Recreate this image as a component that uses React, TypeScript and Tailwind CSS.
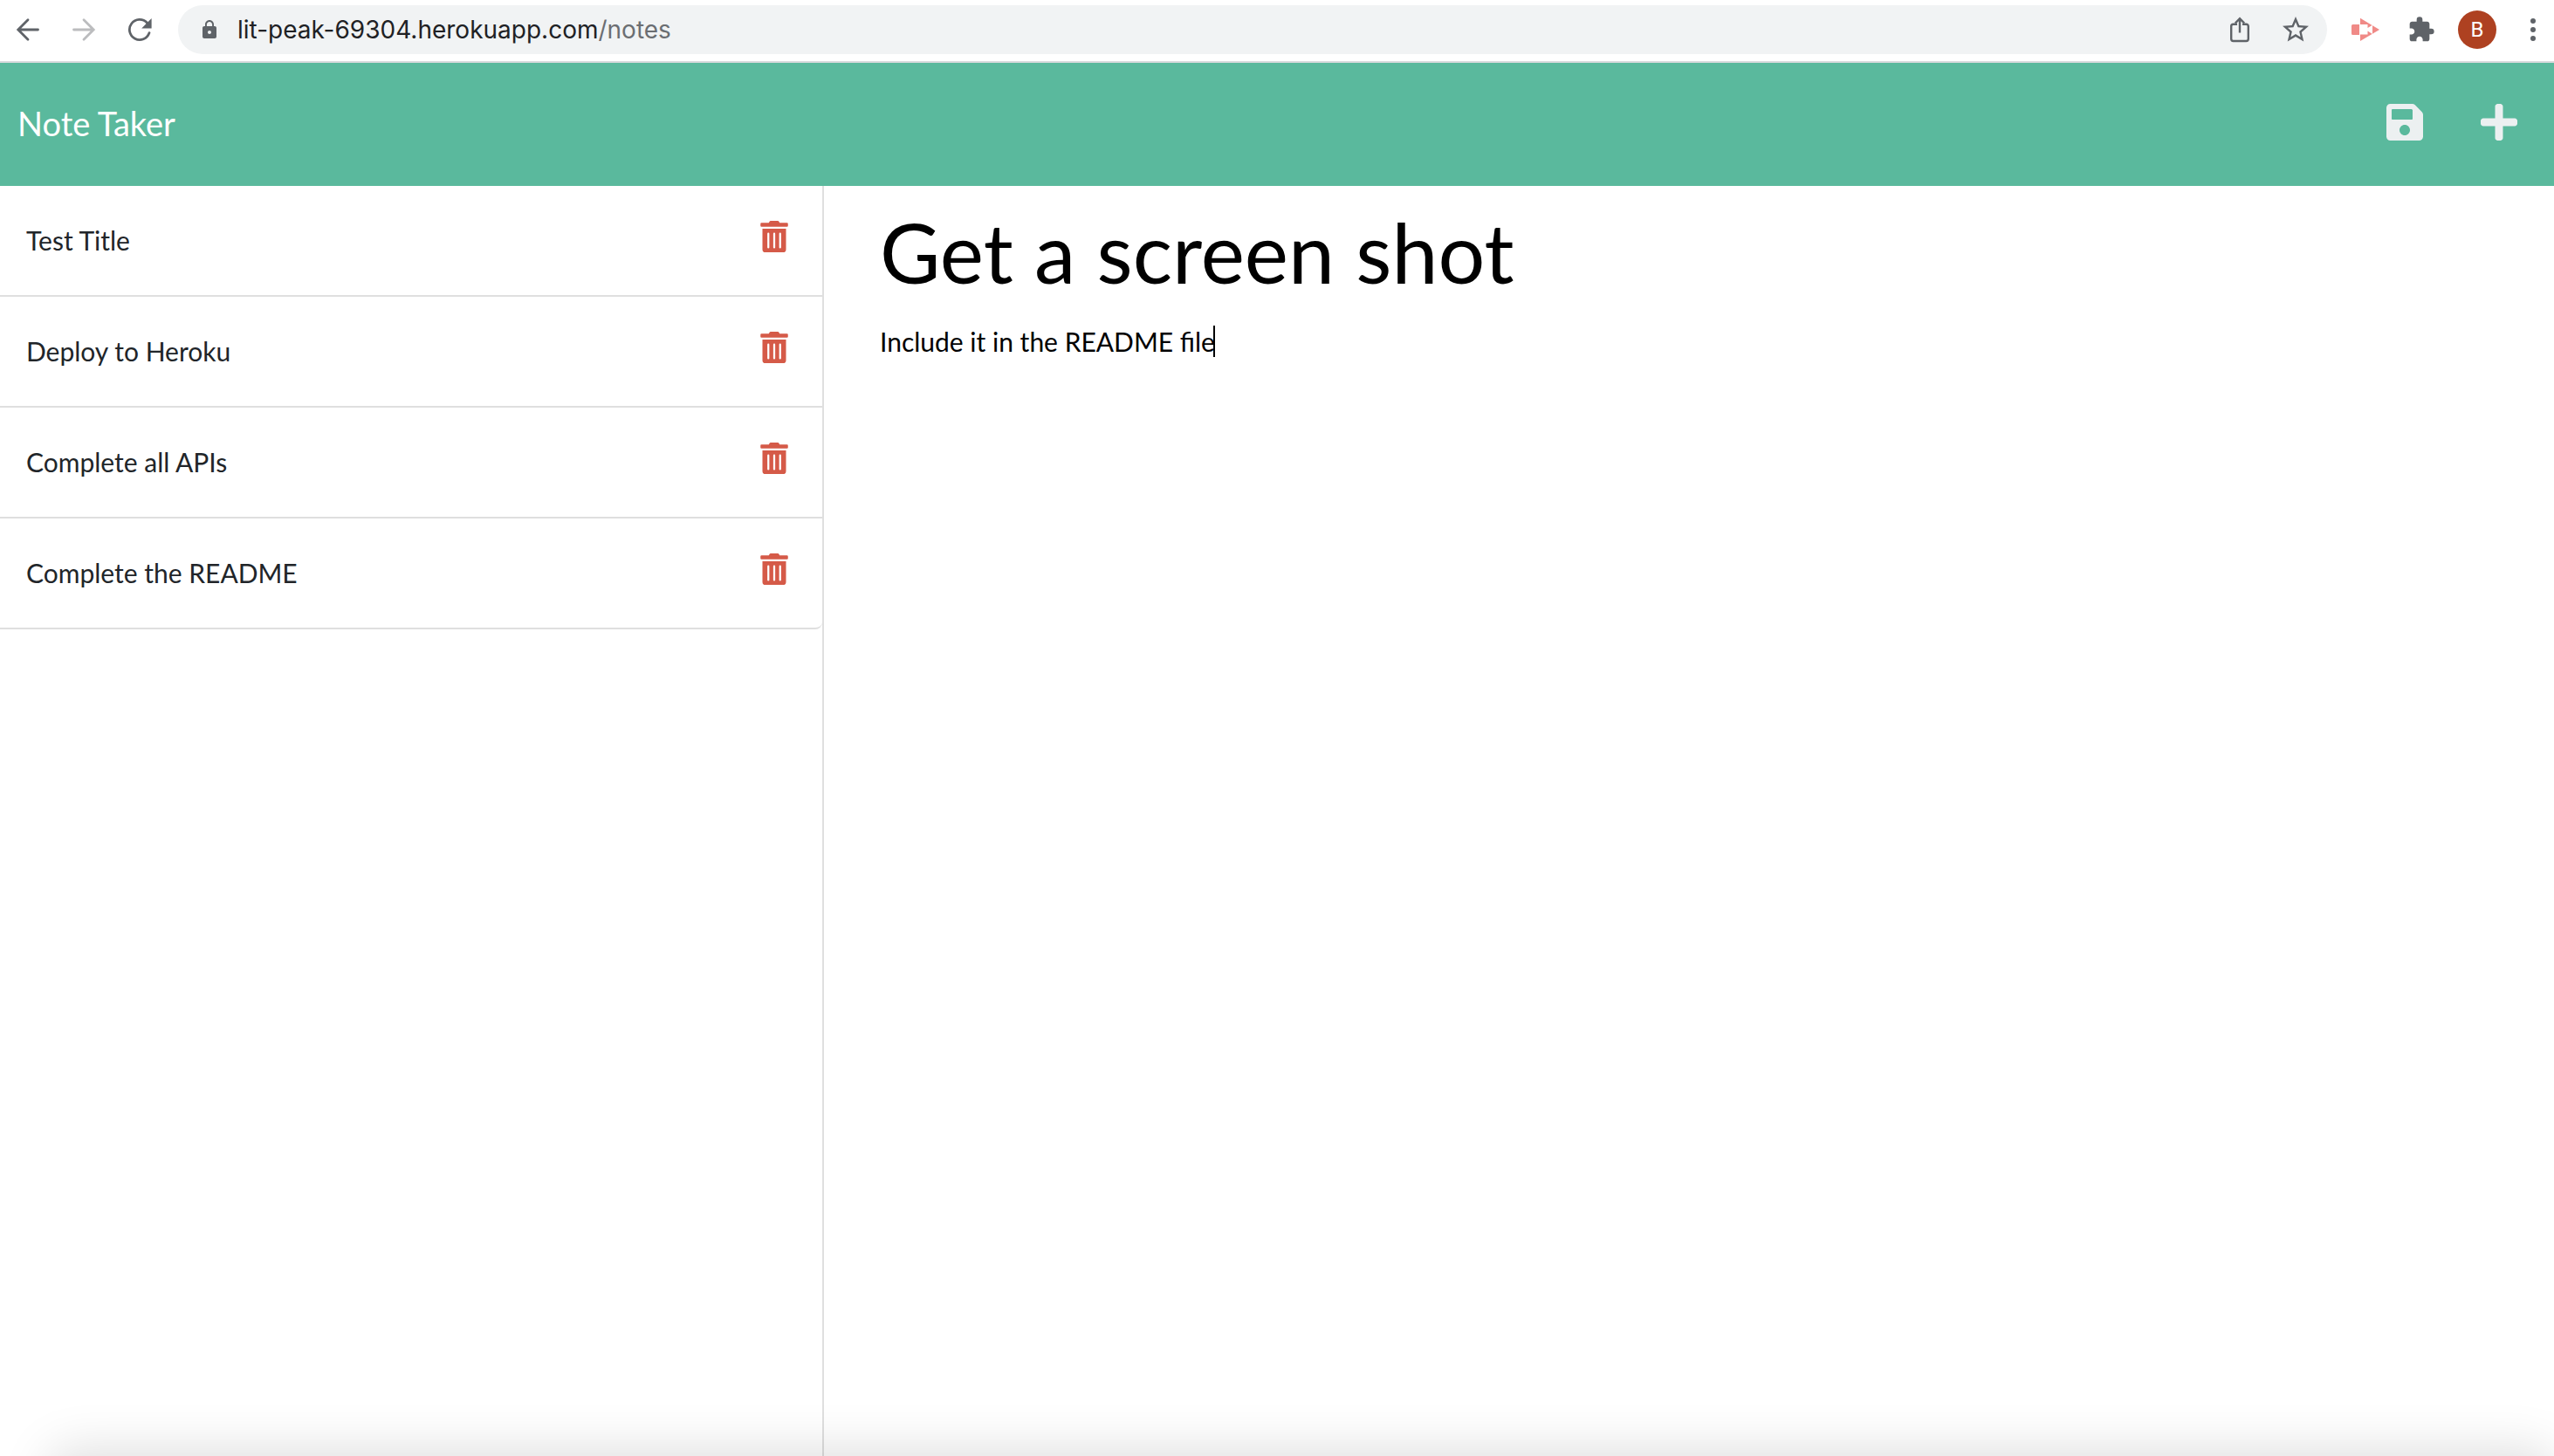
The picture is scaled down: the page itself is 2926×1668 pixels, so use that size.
import React, { useState } from "react";
import { FaPlus, FaSave, FaTrashAlt } from "react-icons/fa";
import { MdExtension, MdLock, MdStarBorder } from "react-icons/md";

const notes = ["Test Title", "Deploy to Heroku", "Complete all APIs", "Complete the README"];

function ArrowIcon({ className }: { className: string }) {
  return (
    <svg viewBox="0 0 28 28" className={className} fill="none" stroke="currentColor" strokeWidth="2.8" strokeLinecap="round" strokeLinejoin="miter" aria-hidden="true">
      <path d="M25.5 14H3M14 2.8 2.8 14 14 25.2" />
    </svg>
  );
}

function ReloadIcon() {
  return (
    <svg viewBox="0 0 28 28" className="size-7" aria-hidden="true">
      <path d="M25 17.6A11.6 11.6 0 1 1 22.4 6" fill="none" stroke="currentColor" strokeWidth="2.8" strokeLinecap="round" />
      <path d="M27.6 1v11.4H16.2z" fill="currentColor" />
    </svg>
  );
}

function ShareIcon() {
  return (
    <svg viewBox="0 0 24 30" className="h-[30px] w-6" fill="none" stroke="currentColor" strokeWidth="2.4" aria-hidden="true">
      <path d="M9 8.7H4.6a2.4 2.4 0 0 0-2.4 2.4v14.5a2.4 2.4 0 0 0 2.4 2.4h14.8a2.4 2.4 0 0 0 2.4-2.4V11.1a2.4 2.4 0 0 0-2.4-2.4H15" />
      <path d="M12 18.5V2.5M6.8 7.5 12 2.3l5.2 5.2" />
    </svg>
  );
}

function RecorderIcon() {
  return (
    <svg viewBox="0 0 32 28" className="h-7 w-8" aria-hidden="true">
      <path d="M10 .7 32 14 10 27z" fill="#f08a87" />
      <path d="M9 8h9.5v4L24 8.7V19l-5.5-3.5v4H9z" fill="#fff" />
      <path d="M1.5 8H9v12H1.500A1.500 1.500 0 0 1 0 18.500v-9A1.500 1.500 0 0 1 1.500 8z" fill="#f08a87" />
    </svg>
  );
}

function DotsIcon() {
  return (
    <svg viewBox="0 0 6 28" className="h-7 w-1.5" fill="currentColor" aria-hidden="true">
      <circle cx="3" cy="4" r="3" />
      <circle cx="3" cy="14" r="3" />
      <circle cx="3" cy="24" r="3" />
    </svg>
  );
}

function BrowserBar() {
  return (
    <div className="flex items-center border-b-2 border-[#d9dadd] bg-white pt-1.5 pr-[21px] pb-2 pl-[18px] text-[#5f6368]">
      <div className="flex items-center gap-9">
        <button type="button" aria-label="Back"><ArrowIcon className="size-7" /></button>
        <button type="button" aria-label="Forward" className="text-[#bbbcbe]"><ArrowIcon className="size-7 rotate-180" /></button>
        <button type="button" aria-label="Reload"><ReloadIcon /></button>
      </div>
      <div className="ml-[30px] flex h-14 flex-1 items-center rounded-full bg-[#f1f3f4] pr-[18px] pl-6">
        <MdLock className="size-6" aria-hidden="true" />
        <div className="ml-5 flex-1 font-['Inter',sans-serif] text-[28px] leading-9 text-[#202124]">
          lit-peak-69304.herokuapp.com<span className="text-[#6b6e72]">/notes</span>
        </div>
        <div className="flex items-center gap-[34px]">
          <button type="button" aria-label="Share"><ShareIcon /></button>
          <button type="button" aria-label="Bookmark"><MdStarBorder className="size-9" /></button>
        </div>
      </div>
      <button type="button" aria-label="Screen recorder" className="ml-7"><RecorderIcon /></button>
      <button type="button" aria-label="Extensions" className="ml-8"><MdExtension className="size-8" /></button>
      <button type="button" aria-label="Profile" className="ml-[26px] flex size-11 items-center justify-center rounded-full bg-[#ae4121] font-['Roboto',sans-serif] text-2xl text-white">B</button>
      <button type="button" aria-label="Menu" className="ml-[39px]"><DotsIcon /></button>
    </div>
  );
}

export default function App() {
  const [title, setTitle] = useState("Get a screen shot");
  const [text, setText] = useState("Include it in the README file");

  return (
    <div className="relative flex min-h-screen flex-col overflow-hidden bg-white font-['Lato',sans-serif] text-[30px] leading-[48px] text-[#212529]">
      <BrowserBar />
      <header className="flex h-[141px] items-center justify-between bg-[#5ab99d] pr-[39px] pb-1.5 pl-5">
        <a href="/" className="pt-0.5 text-[38px] leading-[60px] text-white">Note Taker</a>
        <div className="flex gap-[60px] text-5xl text-[#ecf0f1]">
          <button type="button" aria-label="Save note"><FaSave /></button>
          <button type="button" aria-label="New note"><FaPlus /></button>
        </div>
      </header>
      <main className="grid flex-1 grid-cols-[944fr_1982fr]">
        <nav aria-label="Notes" className="border-r-2 border-[#dfdfdf]">
          <ul>
            {notes.map((note) => (
              <li key={note} className="flex h-[127px] items-center justify-between border-b-2 border-[#dfdfdf] pr-[37px] pl-[30px] last:rounded-br-lg">
                <button type="button" className="pb-0.5">{note}</button>
                <button type="button" aria-label={`Delete ${note}`} className="pb-2.5 text-4xl text-[#d55a48]"><FaTrashAlt /></button>
              </li>
            ))}
          </ul>
        </nav>
        <section className="flex flex-col pt-[15px] pr-9 pl-16 text-black">
          <input
            aria-label="Note title"
            value={title}
            onChange={(e) => setTitle(e.target.value)}
            className="h-[120px] w-full text-[95px] outline-none"
          />
          <div className="relative mt-[19px] flex-1">
            <textarea
              aria-label="Note text"
              value={text}
              onChange={(e) => setText(e.target.value)}
              className="block h-full w-full resize-none outline-none"
            />
            <span aria-hidden="true" className="absolute top-1.5 left-[382px] h-9 w-0.5 bg-black" />
          </div>
        </section>
      </main>
      <div aria-hidden="true" className="pointer-events-none absolute inset-x-0 bottom-0 h-24 overflow-hidden">
        <div className="absolute top-full right-0 left-14 h-40 rounded-3xl shadow-[0_-8px_56px_rgba(0,0,0,0.13)]" />
      </div>
    </div>
  );
}
